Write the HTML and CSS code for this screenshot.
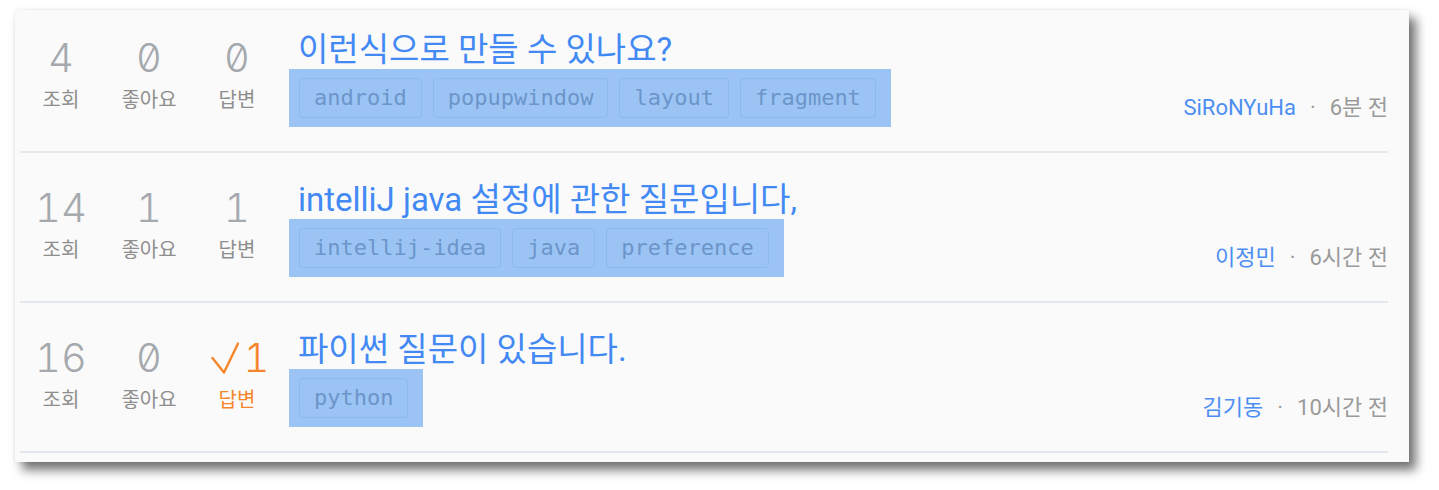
FILE: index.html
```html
<!DOCTYPE html>
<html lang="ko">
<head>
<meta charset="utf-8">
<title>Questions</title>
<link rel="stylesheet" href="styles.css">
</head>
<body>
<div class="card">
  <div class="row first">
    <div class="stats">
      <div class="stat"><div class="num">4</div><div class="label">조회</div></div>
      <div class="stat"><div class="num">0</div><div class="label">좋아요</div></div>
      <div class="stat"><div class="num">0</div><div class="label">답변</div></div>
    </div>
    <div class="main">
      <div class="title">이런식으로 만들 수 있나요?</div>
      <div class="tags">
        <span class="tag">android</span>
        <span class="tag">popupwindow</span>
        <span class="tag">layout</span>
        <span class="tag">fragment</span>
      </div>
    </div>
    <div class="meta"><span class="author">SiRoNYuHa</span><span class="dot">·</span><span class="time">6분 전</span></div>
  </div>
  <div class="row">
    <div class="stats">
      <div class="stat"><div class="num">14</div><div class="label">조회</div></div>
      <div class="stat"><div class="num">1</div><div class="label">좋아요</div></div>
      <div class="stat"><div class="num">1</div><div class="label">답변</div></div>
    </div>
    <div class="main">
      <div class="title">intelliJ java 설정에 관한 질문입니다,</div>
      <div class="tags">
        <span class="tag">intellij-idea</span>
        <span class="tag">java</span>
        <span class="tag">preference</span>
      </div>
    </div>
    <div class="meta"><span class="author">이정민</span><span class="dot">·</span><span class="time">6시간 전</span></div>
  </div>
  <div class="row">
    <div class="stats">
      <div class="stat"><div class="num">16</div><div class="label">조회</div></div>
      <div class="stat"><div class="num">0</div><div class="label">좋아요</div></div>
      <div class="stat accepted"><div class="num"><svg class="check" width="28" height="32" viewBox="0 0 28 32"><polyline points="1.5,16 13,30.5 27,1.5" fill="none" stroke="#f5862b" stroke-width="2.4" stroke-linecap="round" stroke-linejoin="round"/></svg>1</div><div class="label">답변</div></div>
    </div>
    <div class="main">
      <div class="title">파이썬 질문이 있습니다.</div>
      <div class="tags">
        <span class="tag">python</span>
      </div>
    </div>
    <div class="meta"><span class="author">김기동</span><span class="dot">·</span><span class="time">10시간 전</span></div>
  </div>
</div>
</body>
</html>
```
FILE: styles.css
```css
html, body {
  margin: 0;
  padding: 0;
  background: #ffffff;
}
body {
  min-height: 490px;
  font-family: Roboto, "Noto Sans CJK KR", sans-serif;
}
.card {
  margin: 10px 0 0 15px;
  width: 1394px;
  height: 452px;
  box-sizing: border-box;
  padding: 0 21px 0 5px;
  background: #fafafa;
  overflow: hidden;
  box-shadow: 7px 8px 10px rgba(0, 0, 0, 0.55), 0 0 4px rgba(0, 0, 0, 0.08);
}
.row {
  display: flex;
  height: 148px;
  border-bottom: 2px solid #e3e8ee;
}
.row.first {
  margin-top: -7px;
}
.stats {
  display: flex;
  gap: 4px;
  margin-left: -1px;
  padding-top: 33px;
}
.stat {
  width: 84px;
  display: flex;
  flex-direction: column;
  align-items: center;
}
.num {
  font-family: Inter, Roboto, sans-serif;
  font-weight: 300;
  font-size: 40px;
  line-height: 44px;
  height: 44px;
  color: #a5a9ad;
  font-feature-settings: "zero" 1, "tnum" 1;
  display: flex;
  align-items: center;
}
.label {
  font-family: "Noto Sans CJK KR", sans-serif;
  font-size: 20px;
  line-height: 26px;
  margin-top: 6px;
  color: #8e8e8e;
}
.accepted .num, .accepted .label {
  color: #f5862b;
}
.check {
  margin-left: 6px;
  margin-right: 5px;
}
.main {
  flex: 1;
  margin-left: 10px;
  padding-top: 28px;
}
.title {
  font-size: 33px;
  line-height: 38px;
  color: #4289f4;
  padding-left: 9px;
}
.tags {
  display: inline-flex;
  gap: 11px;
  margin-top: 0;
  padding: 9px 15px 9px 10px;
  background: #9bc4f5;
}
.tag {
  font-family: "DejaVu Sans Mono", monospace;
  font-size: 22px;
  line-height: 38px;
  padding: 0 14px;
  border: 1px solid #8eb8ef;
  border-radius: 4px;
  color: #6c95ca;
}
.meta {
  align-self: flex-end;
  margin-bottom: 31px;
  font-size: 22px;
  line-height: 24px;
  white-space: nowrap;
}
.author {
  color: #4d8ef3;
}
.dot {
  color: #9a9a9a;
  margin: 0 14px;
}
.time {
  color: #9a9a9a;
}
```
